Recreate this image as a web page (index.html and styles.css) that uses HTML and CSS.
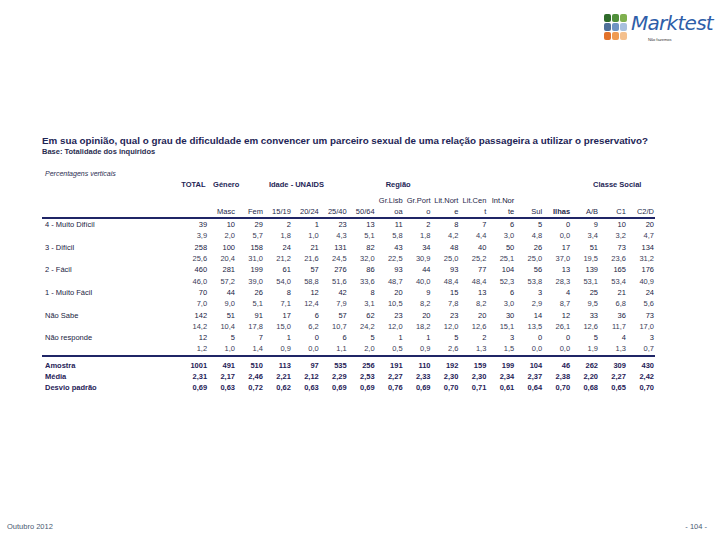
FILE: index.html
```html
<!DOCTYPE html>
<html lang="pt">
<head>
<meta charset="utf-8">
<title>Marktest - Outubro 2012</title>
<link rel="stylesheet" href="styles.css">
</head>
<body>
<div class="page">
  <header class="top">
    <div class="logo">
      <div class="dots">
        <span class="d g1"></span><span class="d g2"></span><span class="d g3"></span>
        <span class="d b1"></span><span class="d b2"></span><span class="d b3"></span>
        <span class="d o1"></span><span class="d o2"></span><span class="d o3"></span>
      </div>
      <div class="brand">
        <span class="name">Marktest</span>
        <span class="tag">Não fazemos</span>
      </div>
    </div>
  </header>

  <section class="content">
    <h1 class="title">Em sua opinião, qual o grau de dificuldade em convencer um parceiro sexual de uma relação passageira a utilizar o preservativo?</h1>
    <p class="base">Base: Totalidade dos inquiridos</p>
    <p class="note">Percentagens verticais</p>

    <table class="data">
      <colgroup>
        <col class="c-label">
        <col span="17" class="c-num">
      </colgroup>
      <thead>
        <tr class="h1">
          <th></th>
          <th class="grp">TOTAL</th>
          <th class="grp g-gen">Género</th>
          <th></th>
          <th class="grp g-age">Idade - UNAIDS</th>
          <th></th><th></th><th></th>
          <th class="grp g-reg">Região</th>
          <th></th><th></th><th></th><th></th><th></th><th></th>
          <th class="grp g-cls">Classe Social</th>
          <th></th><th></th>
        </tr>
        <tr class="h2">
          <th></th>
          <th></th>
          <th>Masc</th><th>Fem</th>
          <th>15/19</th><th>20/24</th><th>25/40</th><th>50/64</th>
          <th>Gr.Lisb<br>oa</th><th>Gr.Port<br>o</th><th>Lit.Nort<br>e</th><th>Lit.Cen<br>t</th><th class="dk">Int.Nor<br>te</th>
          <th>Sul</th><th class="b">Ilhas</th><th>A/B</th><th>C1</th><th>C2/D</th>
        </tr>
      </thead>
      <tbody class="main">
        <tr class="n"><td>4 - Muito Difícil</td><td>39</td><td>10</td><td>29</td><td>2</td><td>1</td><td>23</td><td>13</td><td>11</td><td>2</td><td>8</td><td>7</td><td>6</td><td>5</td><td>0</td><td>9</td><td>10</td><td>20</td></tr>
        <tr class="p"><td></td><td>3,9</td><td>2,0</td><td>5,7</td><td>1,8</td><td>1,0</td><td>4,3</td><td>5,1</td><td>5,8</td><td>1,8</td><td>4,2</td><td>4,4</td><td>3,0</td><td>4,8</td><td>0,0</td><td>3,4</td><td>3,2</td><td>4,7</td></tr>
        <tr class="n"><td>3 - Difícil</td><td>258</td><td>100</td><td>158</td><td>24</td><td>21</td><td>131</td><td>82</td><td>43</td><td>34</td><td>48</td><td>40</td><td>50</td><td>26</td><td>17</td><td>51</td><td>73</td><td>134</td></tr>
        <tr class="p"><td></td><td>25,6</td><td>20,4</td><td>31,0</td><td>21,2</td><td>21,6</td><td>24,5</td><td>32,0</td><td>22,5</td><td>30,9</td><td>25,0</td><td>25,2</td><td>25,1</td><td>25,0</td><td>37,0</td><td>19,5</td><td>23,6</td><td>31,2</td></tr>
        <tr class="n"><td>2 - Fácil</td><td>460</td><td>281</td><td>199</td><td>61</td><td>57</td><td>276</td><td>86</td><td>93</td><td>44</td><td>93</td><td>77</td><td>104</td><td>56</td><td>13</td><td>139</td><td>165</td><td>176</td></tr>
        <tr class="p"><td></td><td>46,0</td><td>57,2</td><td>39,0</td><td>54,0</td><td>58,8</td><td>51,6</td><td>33,6</td><td>48,7</td><td>40,0</td><td>48,4</td><td>48,4</td><td>52,3</td><td>53,8</td><td>28,3</td><td>53,1</td><td>53,4</td><td>40,9</td></tr>
        <tr class="n"><td>1 - Muito Fácil</td><td>70</td><td>44</td><td>26</td><td>8</td><td>12</td><td>42</td><td>8</td><td>20</td><td>9</td><td>15</td><td>13</td><td>6</td><td>3</td><td>4</td><td>25</td><td>21</td><td>24</td></tr>
        <tr class="p"><td></td><td>7,0</td><td>9,0</td><td>5,1</td><td>7,1</td><td>12,4</td><td>7,9</td><td>3,1</td><td>10,5</td><td>8,2</td><td>7,8</td><td>8,2</td><td>3,0</td><td>2,9</td><td>8,7</td><td>9,5</td><td>6,8</td><td>5,6</td></tr>
        <tr class="n"><td>Não Sabe</td><td>142</td><td>51</td><td>91</td><td>17</td><td>6</td><td>57</td><td>62</td><td>23</td><td>20</td><td>23</td><td>20</td><td>30</td><td>14</td><td>12</td><td>33</td><td>36</td><td>73</td></tr>
        <tr class="p"><td></td><td>14,2</td><td>10,4</td><td>17,8</td><td>15,0</td><td>6,2</td><td>10,7</td><td>24,2</td><td>12,0</td><td>18,2</td><td>12,0</td><td>12,6</td><td>15,1</td><td>13,5</td><td>26,1</td><td>12,6</td><td>11,7</td><td>17,0</td></tr>
        <tr class="n"><td>Não responde</td><td>12</td><td>5</td><td>7</td><td>1</td><td>0</td><td>6</td><td>5</td><td>1</td><td>1</td><td>5</td><td>2</td><td>3</td><td>0</td><td>0</td><td>5</td><td>4</td><td>3</td></tr>
        <tr class="p last"><td></td><td>1,2</td><td>1,0</td><td>1,4</td><td>0,9</td><td>0,0</td><td>1,1</td><td>2,0</td><td>0,5</td><td>0,9</td><td>2,6</td><td>1,3</td><td>1,5</td><td>0,0</td><td>0,0</td><td>1,9</td><td>1,3</td><td>0,7</td></tr>
      </tbody>
      <tbody class="stats">
        <tr class="first"><td>Amostra</td><td>1001</td><td>491</td><td>510</td><td>113</td><td>97</td><td>535</td><td>256</td><td>191</td><td>110</td><td>192</td><td>159</td><td>199</td><td>104</td><td>46</td><td>262</td><td>309</td><td>430</td></tr>
        <tr><td>Média</td><td>2,31</td><td>2,17</td><td>2,46</td><td>2,21</td><td>2,12</td><td>2,29</td><td>2,53</td><td>2,27</td><td>2,33</td><td>2,30</td><td>2,30</td><td>2,34</td><td>2,37</td><td>2,38</td><td>2,20</td><td>2,27</td><td>2,42</td></tr>
        <tr><td>Desvio padrão</td><td>0,69</td><td>0,63</td><td>0,72</td><td>0,62</td><td>0,63</td><td>0,69</td><td>0,69</td><td>0,76</td><td>0,69</td><td>0,70</td><td>0,71</td><td>0,61</td><td>0,64</td><td>0,70</td><td>0,68</td><td>0,65</td><td>0,70</td></tr>
      </tbody>
    </table>
  </section>

  <footer class="foot">
    <span class="date">Outubro 2012</span>
    <span class="pg">- 104 -</span>
  </footer>
</div>
</body>
</html>
```
FILE: styles.css
```css
html, body {
  margin: 0;
  padding: 0;
  background: #ffffff;
}
body {
  font-family: "Liberation Sans", Arial, sans-serif;
  color: #26284a;
}
.page {
  width: 720px;
  height: 540px;
  display: flex;
  flex-direction: column;
  overflow: hidden;
}

/* logo */
.top {
  display: flex;
  justify-content: flex-end;
  padding: 13px 7px 0 0;
  height: 37px;
}
.logo {
  display: flex;
  align-items: flex-start;
  gap: 4px;
}
.dots {
  display: grid;
  grid-template-columns: repeat(3, 7px);
  grid-auto-rows: 8px;
  gap: 1px;
  margin-top: 1px;
}
.d { border-radius: 2px; }
.g1 { background: #2f6b2a; }
.g2 { background: #4f8f3a; }
.g3 { background: #7fb04f; }
.b1 { background: #4e6f99; }
.b2 { background: #6f94c4; }
.b3 { background: #a8c0de; }
.o1 { background: #e2722b; }
.o2 { background: #ef9a52; }
.o3 { background: #f4c08e; }
.brand {
  display: flex;
  flex-direction: column;
}
.name {
  font-family: "DejaVu Sans", "Liberation Sans", sans-serif;
  font-style: italic;
  font-size: 20px;
  line-height: 21px;
  color: #2e5ea9;
  letter-spacing: -0.7px;
}
.tag {
  font-size: 4px;
  line-height: 5px;
  color: #333;
  margin: 3px 0 0 17px;
}

/* text */
.content {
  padding: 0 0 0 42px;
  margin-top: 85px;
}
.title {
  margin: 0;
  font-size: 9.8px;
  line-height: 12px;
  font-weight: bold;
  color: #1e2556;
  white-space: nowrap;
}
.base {
  margin: 0;
  font-size: 7.5px;
  line-height: 10px;
  font-weight: bold;
  color: #2a2d50;
}
.note {
  margin: 12px 0 0 3px;
  font-size: 7px;
  line-height: 10px;
  font-style: italic;
  color: #2a2d50;
}

/* table */
.data {
  border-collapse: collapse;
  table-layout: fixed;
  width: 613px;
  margin-top: 0;
  font-size: 7.5px;
}
.c-label { width: 138px; }
.c-num { width: 27.9px; }
.data th, .data td {
  padding: 0 1px 0 0;
  text-align: right;
  white-space: nowrap;
  vertical-align: middle;
}
.data td:first-child { text-align: left; padding-left: 3px; }
.h1 th {
  height: 16px;
  line-height: 11px;
  vertical-align: top;
  text-align: left;
  font-weight: bold;
  color: #1e2556;
  overflow: visible;
}
.h1 th.grp { padding-left: 1px; }
.h1 th.g-gen { padding-left: 5px; }
.h1 th.g-age { padding-left: 5px; }
.h1 th.g-reg { padding-left: 10px; }
.h1 th.g-cls { padding-left: 22px; }
.h2 th {
  height: 22px;
  line-height: 11px;
  vertical-align: bottom;
  font-weight: normal;
  border-bottom: 2px solid #1f2566;
}
.h2 th.b { font-weight: bold; }
.h2 th.dk { color: #14163a; }
.main td {
  height: 11.3px;
  line-height: 11px;
}
.main tr.n td { color: #20223f; }
.main tr.p td { color: #3a3c58; }
.main tr.last td { border-bottom: 2px solid #1f2566; }
.stats td {
  height: 11px;
  line-height: 11px;
  font-weight: bold;
  color: #1f2257;
}
.stats tr.first td { padding-top: 3px; }

/* footer */
.foot {
  margin-top: auto;
  display: flex;
  justify-content: space-between;
  padding: 0 13px 8px 7px;
  font-size: 7.5px;
  line-height: 10px;
  color: #4a5a72;
}
```
